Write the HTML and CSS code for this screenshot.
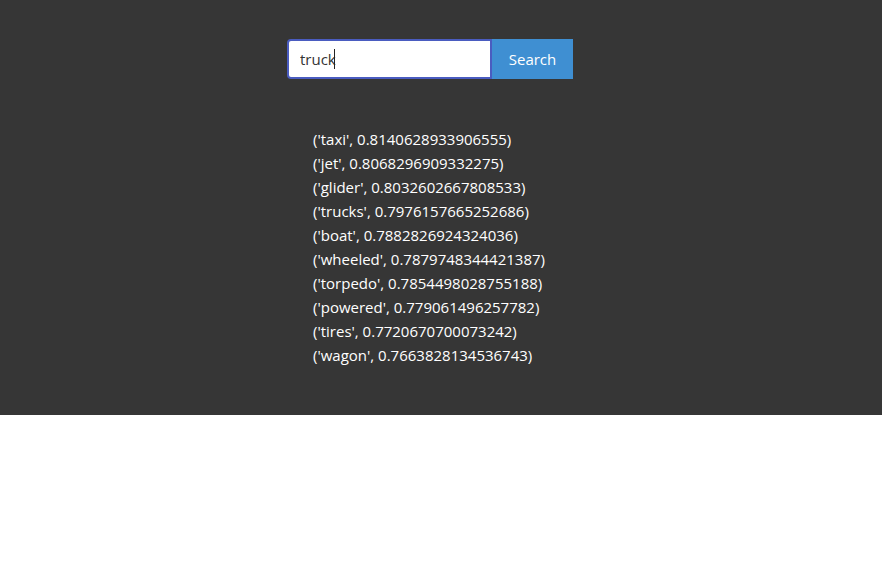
FILE: index.html
```html
<!DOCTYPE html>
<html>
<head>
<meta charset="utf-8">
<link rel="stylesheet" href="styles.css">
</head>
<body>
<section class="hero">
  <form class="search">
    <div class="field">
      <input class="search-input" type="text" value="truck">
      <span class="caret"></span>
    </div>
    <button class="search-btn" type="button">Search</button>
  </form>
  <ul class="results">
    <li>('taxi', 0.8140628933906555)</li>
    <li>('jet', 0.8068296909332275)</li>
    <li>('glider', 0.8032602667808533)</li>
    <li>('trucks', 0.7976157665252686)</li>
    <li>('boat', 0.7882826924324036)</li>
    <li>('wheeled', 0.7879748344421387)</li>
    <li>('torpedo', 0.7854498028755188)</li>
    <li>('powered', 0.779061496257782)</li>
    <li>('tires', 0.7720670700073242)</li>
    <li>('wagon', 0.7663828134536743)</li>
  </ul>
</section>
</body>
</html>
```
FILE: styles.css
```css
html, body {
  margin: 0;
  padding: 0;
  background: #ffffff;
  font-family: "Open Sans", "Noto Sans", sans-serif;
}
.hero {
  background: #363636;
  height: 415px;
  box-sizing: border-box;
  padding: 39px 0 0 287px;
}
.search {
  display: flex;
  margin: 0;
}
.field {
  position: relative;
}
.search-input {
  display: block;
  width: 205px;
  height: 40px;
  box-sizing: border-box;
  border: 2px solid #4a5cc0;
  border-radius: 4px 0 0 4px;
  padding: 0 11px;
  font-family: inherit;
  font-size: 15px;
  color: #333;
  outline: none;
  background: #fff;
}
.caret {
  position: absolute;
  left: 47px;
  top: 10px;
  width: 1px;
  height: 20px;
  background: #222;
}
.search-btn {
  width: 81px;
  height: 40px;
  border: none;
  background: #3f8fd2;
  color: #fff;
  font-family: inherit;
  font-size: 15px;
  padding: 0;
  border-radius: 0;
}
.results {
  list-style: none;
  margin: 48px 0 0 26px;
  padding: 0;
  color: #fff;
  font-size: 15px;
  line-height: 24px;
}
```
